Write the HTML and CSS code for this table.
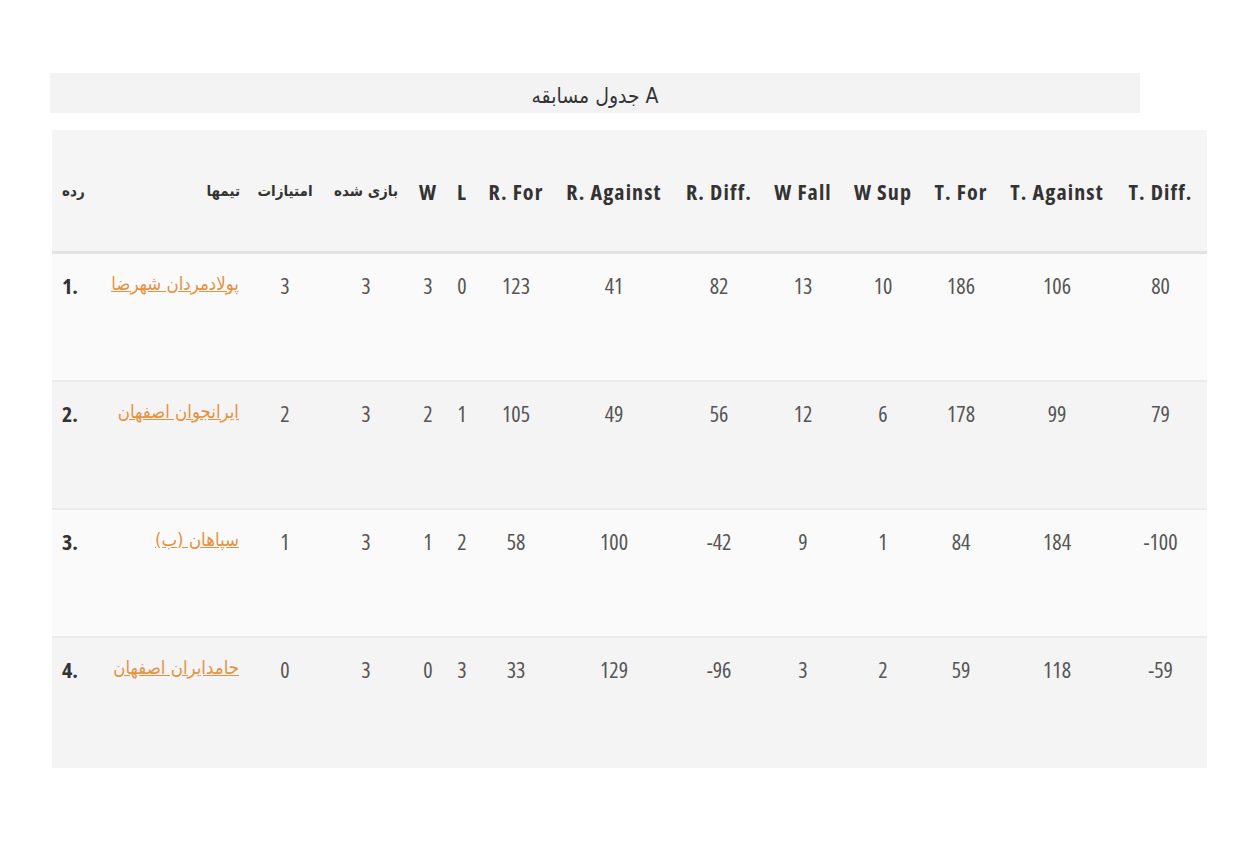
FILE: index.html
```html
<!DOCTYPE html>
<html lang="fa">
<head>
<meta charset="utf-8">
<title>جدول مسابقه A</title>
<link rel="stylesheet" href="styles.css">
</head>
<body>
<div class="page">
  <div class="title-bar">جدول مسابقه A</div>
  <table class="standings">
    <colgroup>
      <col class="c-rank"><col class="c-team"><col class="c-pts"><col class="c-played">
      <col class="c-w"><col class="c-l"><col class="c-rfor"><col class="c-ragainst">
      <col class="c-rdiff"><col class="c-wfall"><col class="c-wsup"><col class="c-tfor">
      <col class="c-tagainst"><col class="c-tdiff">
    </colgroup>
    <thead>
      <tr>
        <th class="rank fa">رده</th>
        <th class="team fa">تیمها</th>
        <th class="fa">امتیازات</th>
        <th class="fa">بازی شده</th>
        <th>W</th><th>L</th><th>R. For</th><th>R. Against</th><th>R. Diff.</th>
        <th>W Fall</th><th>W Sup</th><th>T. For</th><th>T. Against</th><th>T. Diff.</th>
      </tr>
    </thead>
    <tbody>
      <tr class="odd">
        <td class="rank">1.</td><td class="team"><a href="#">پولادمردان شهرضا</a></td>
        <td>3</td><td>3</td><td>3</td><td>0</td><td>123</td><td>41</td><td>82</td><td>13</td><td>10</td><td>186</td><td>106</td><td>80</td>
      </tr>
      <tr class="even">
        <td class="rank">2.</td><td class="team"><a href="#">ایرانجوان اصفهان</a></td>
        <td>2</td><td>3</td><td>2</td><td>1</td><td>105</td><td>49</td><td>56</td><td>12</td><td>6</td><td>178</td><td>99</td><td>79</td>
      </tr>
      <tr class="odd">
        <td class="rank">3.</td><td class="team"><a href="#">سپاهان (ب)</a></td>
        <td>1</td><td>3</td><td>1</td><td>2</td><td>58</td><td>100</td><td>-42</td><td>9</td><td>1</td><td>84</td><td>184</td><td>-100</td>
      </tr>
      <tr class="even">
        <td class="rank">4.</td><td class="team"><a href="#">حامدایران اصفهان</a></td>
        <td>0</td><td>3</td><td>0</td><td>3</td><td>33</td><td>129</td><td>-96</td><td>3</td><td>2</td><td>59</td><td>118</td><td>-59</td>
      </tr>
    </tbody>
  </table>
</div>
</body>
</html>
```

FILE: styles.css
```css
html, body {
  margin: 0;
  padding: 0;
  background: #ffffff;
}

body {
  font-family: "Open Sans", "DejaVu Sans Condensed", "DejaVu Sans", sans-serif;
  font-stretch: 75%;
  color: #555555;
}

.page {
  padding: 73px 43px 0 52px;
}

.title-bar {
  width: 1090px;
  height: 40px;
  margin-left: -2px;
  background: #f3f3f3;
  color: #333333;
  font-family: "DejaVu Sans Condensed", "DejaVu Sans", sans-serif;
  font-size: 21px;
  line-height: 46px;
  text-align: center;
}

.standings {
  margin-top: 17px;
  width: 1155px;
  table-layout: fixed;
  border-collapse: collapse;
}

.c-rank { width: 48px; }
.c-team { width: 150px; }
.c-pts { width: 70px; }
.c-played { width: 92px; }
.c-w { width: 32px; }
.c-l { width: 36px; }
.c-rfor { width: 72px; }
.c-ragainst { width: 124px; }
.c-rdiff { width: 86px; }
.c-wfall { width: 82px; }
.c-wsup { width: 78px; }
.c-tfor { width: 78px; }
.c-tagainst { width: 114px; }
.c-tdiff { width: 93px; }

.standings th {
  height: 121px;
  padding: 0;
  background: #f5f5f5;
  border-bottom: 3px solid #e2e2e2;
  color: #333333;
  font-size: 22px;
  font-weight: 700;
  letter-spacing: 1.1px;
  text-align: center;
  vertical-align: middle;
  white-space: nowrap;
}

.standings th.fa {
  font-family: "DejaVu Sans Condensed", "DejaVu Sans", sans-serif;
  font-size: 15px;
  letter-spacing: 0;
}

.standings td {
  height: 110px;
  padding: 16px 0 0;
  font-size: 22px;
  text-align: center;
  vertical-align: top;
  white-space: nowrap;
  border-bottom: 2px solid #ebebeb;
}

.standings tbody tr:last-child td {
  height: 114px;
  border-bottom: 0;
}

.standings tr.odd td { background: #fafafa; }
.standings tr.even td { background: #f4f4f4; }

.standings .rank {
  text-align: left;
  padding-left: 10px;
}

.standings td.rank {
  font-weight: 700;
  color: #333333;
}

.standings .team {
  text-align: right;
  padding-right: 11px;
}

.standings th.team {
  padding-right: 10px;
}

.standings td.team {
  height: 114px;
  padding-top: 12px;
}

.standings tbody tr:last-child td.team {
  height: 118px;
}

.team a {
  font-family: "DejaVu Sans Condensed", "DejaVu Sans", sans-serif;
  font-size: 18.5px;
  color: #e8913f;
  text-decoration: underline;
}
```
